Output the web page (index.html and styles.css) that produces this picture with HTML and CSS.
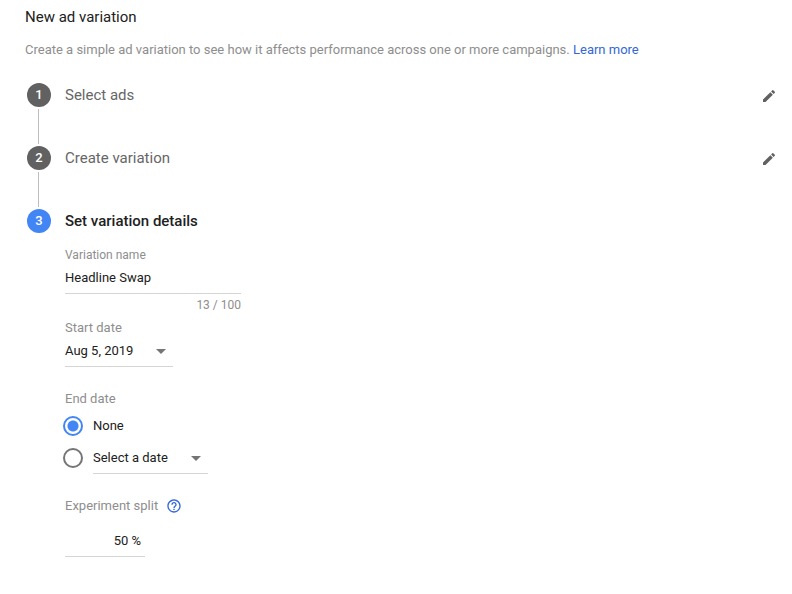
FILE: index.html
```html
<!DOCTYPE html>
<html lang="en">
  <head>
    <meta charset="UTF-8">
    <meta name="viewport" content="width=device-width, initial-scale=1.0">
    <title>New ad variation</title>
    <link rel="stylesheet" href="styles.css">
  </head>
  <body>

    <h1 class="page-title">New ad variation</h1>
    <p class="intro">Create a simple ad variation to see how it affects performance across one or more campaigns. <a href="#">Learn more</a></p>

    <ol class="steps">
      <li class="step">
        <div class="rail">
          <span class="marker">1</span>
          <span class="line"></span>
        </div>
        <div class="step-head">
          <h2>Select ads</h2>
          <button class="edit" type="button" aria-label="Edit ads">
            <svg viewBox="0 0 24 24"><path d="M3 17.25V21h3.75L17.81 9.94l-3.75-3.75L3 17.25zM20.71 7.04a1 1 0 0 0 0-1.41l-2.34-2.34a1 1 0 0 0-1.41 0l-1.83 1.83 3.75 3.75 1.83-1.83z"/></svg>
          </button>
        </div>
      </li>

      <li class="step">
        <div class="rail">
          <span class="marker">2</span>
          <span class="line"></span>
        </div>
        <div class="step-head">
          <h2>Create variation</h2>
          <button class="edit" type="button" aria-label="Edit variation">
            <svg viewBox="0 0 24 24"><path d="M3 17.25V21h3.75L17.81 9.94l-3.75-3.75L3 17.25zM20.71 7.04a1 1 0 0 0 0-1.41l-2.34-2.34a1 1 0 0 0-1.41 0l-1.83 1.83 3.75 3.75 1.83-1.83z"/></svg>
          </button>
        </div>
      </li>

      <li class="step active">
        <div class="rail">
          <span class="marker">3</span>
        </div>
        <div class="step-body">
          <div class="step-head">
            <h2>Set variation details</h2>
          </div>

          <form class="details">
            <div class="field name-field">
              <label class="small" for="name">Variation name</label>
              <input class="control" type="text" id="name" value="Headline Swap" maxlength="100">
              <span class="counter small">13 / 100</span>
            </div>

            <div class="field start-field">
              <label for="start">Start date</label>
              <div class="dropdown">
                <select class="control" id="start">
                  <option>Aug 5, 2019</option>
                </select>
              </div>
            </div>

            <fieldset class="field end-field">
              <legend>End date</legend>
              <div class="radio-row">
                <input type="radio" name="end" id="end-none" checked>
                <label for="end-none">None</label>
              </div>
              <div class="radio-row">
                <input type="radio" name="end" id="end-date" aria-label="End on a date">
                <div class="dropdown end-dropdown">
                  <select class="control" aria-label="End date">
                    <option>Select a date</option>
                  </select>
                </div>
              </div>
            </fieldset>

            <div class="field split-field">
              <div class="split-label">
                <label for="split">Experiment split</label>
                <button class="help" type="button" aria-label="Help">
                  <svg viewBox="0 0 24 24"><path d="M11 18h2v-2h-2v2zm1-16C6.48 2 2 6.48 2 12s4.48 10 10 10 10-4.48 10-10S17.52 2 12 2zm0 18c-4.41 0-8-3.59-8-8s3.59-8 8-8 8 3.59 8 8-3.59 8-8 8zm0-14c-2.21 0-4 1.79-4 4h2c0-1.1.9-2 2-2s2 .9 2 2c0 2-3 1.75-3 5h2c0-2.25 3-2.5 3-5 0-2.21-1.79-4-4-4z"/></svg>
                </button>
              </div>
              <input class="control split" type="text" id="split" value="50 %">
            </div>
          </form>
        </div>
      </li>
    </ol>

  </body>
</html>
```
FILE: styles.css
```css
* {
  box-sizing: border-box;
}

body {
  margin: 0;
  padding: 5px 15px 32px 25px;
  background: #fff;
  color: #212121;
  font-family: Roboto, sans-serif;
  font-size: 13px;
  line-height: 16px;
}

input, select, button {
  font: inherit;
  color: inherit;
}

.page-title {
  margin: 0;
  font-size: 15px;
  font-weight: 400;
  line-height: 24px;
}

.intro {
  margin: 12px 0 0;
  color: #8e8e8e;
  line-height: 18px;
}

.intro a {
  color: #3367d6;
  text-decoration: none;
}

/* stepper */

.steps {
  list-style: none;
  margin: 24px 0 0 2px;
  padding: 0;
}

.step {
  display: grid;
  grid-template-columns: 24px 1fr;
  column-gap: 14px;
}

.rail {
  display: flex;
  flex-direction: column;
  align-items: center;
}

.marker {
  width: 24px;
  height: 24px;
  border-radius: 50%;
  background: #616161;
  color: #fff;
  font-weight: 500;
  line-height: 24px;
  text-align: center;
}

.line {
  width: 1px;
  height: 35px;
  margin: 2px 1px 2px 0;
  background: #bdbdbd;
}

.step-head {
  display: flex;
  justify-content: space-between;
  align-items: center;
  height: 24px;
}

.step-head h2 {
  margin: 0;
  color: #666;
  font-size: 15px;
  font-weight: 400;
}

.active .marker {
  background: #4285f4;
}

.active h2 {
  color: #212121;
  font-weight: 500;
}

.edit, .help {
  display: flex;
  padding: 0;
  border: 0;
  background: none;
  cursor: pointer;
}

.edit {
  padding-top: 2px;
}

.edit svg {
  width: 16px;
  height: 16px;
  fill: #616161;
}

/* form */

.details {
  margin-top: 14px;
}

.field {
  display: flex;
  flex-direction: column;
  margin: 0;
  padding: 0;
  border: 0;
  color: #8e8e8e;
}

.small {
  font-size: 12px;
}

.control {
  width: 100%;
  height: 31px;
  padding: 0;
  border: 0;
  border-bottom: 1px solid #d5d5d5;
  border-radius: 0;
  background: none;
  color: #212121;
  appearance: none;
  outline: none;
}

input.control {
  padding-bottom: 2px;
}

.name-field {
  width: 176px;
}

.counter {
  margin-top: 3px;
  text-align: right;
}

.start-field {
  width: 108px;
  margin-top: 7px;
}

.dropdown {
  display: grid;
  align-items: center;
}

.dropdown .control {
  grid-area: 1 / 1;
}

.dropdown::after {
  content: "";
  grid-area: 1 / 1;
  justify-self: end;
  margin-right: 7px;
  border: 5px solid transparent;
  border-top-color: #757575;
  border-bottom: 0;
  pointer-events: none;
}

.end-field {
  margin-top: 24px;
}

.end-field legend {
  padding: 0;
  margin-bottom: 3px;
}

.radio-row {
  display: flex;
  align-items: center;
  gap: 10px;
  height: 32px;
  margin-left: -2px;
  color: #212121;
}

.radio-row input {
  appearance: none;
  flex: none;
  width: 20px;
  height: 20px;
  margin: 0;
  border: 2px solid #757575;
  border-radius: 50%;
}

.radio-row input:checked {
  border-color: #4285f4;
  background: radial-gradient(circle, #4285f4 5px, transparent 6px);
}

.end-dropdown {
  width: 115px;
}

.split-field {
  margin-top: 24px;
}

.split-label {
  display: flex;
  align-items: center;
  gap: 8px;
}

.help svg {
  width: 16px;
  height: 16px;
  fill: #3367d6;
}

.split {
  width: 80px;
  margin-top: 12px;
  padding-right: 4px;
  text-align: right;
}
```
